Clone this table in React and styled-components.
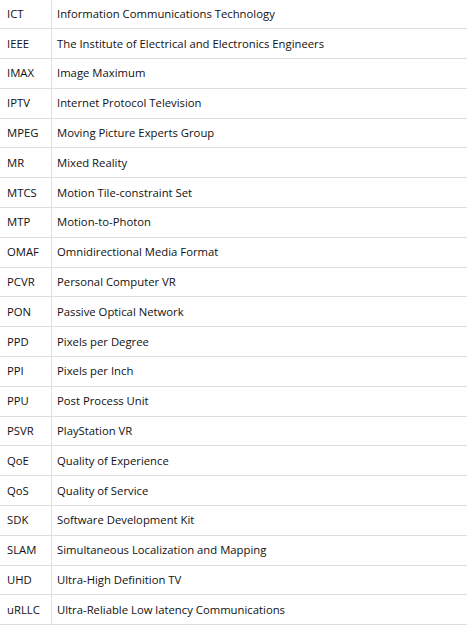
import React from 'react';
import styled, { createGlobalStyle } from 'styled-components';

const Global = createGlobalStyle`
  body {
    margin: 0;
    background: #fff;
  }
`;

const Table = styled.div`
  width: 467px;
  margin-top: -1.5px;
  font-family: 'Open Sans', 'Noto Sans', sans-serif;
  font-size: 11.3px;
  color: #111;
`;

const Row = styled.div`
  display: grid;
  grid-template-columns: 51px 1fr;
  height: 29.8px;
  border-top: 1px solid #dedede;
  box-sizing: border-box;
`;

const Cell = styled.div`
  display: flex;
  align-items: center;
  padding-left: ${(p) => (p.$abbr ? '7px' : '5px')};
  padding-bottom: 1px;
  border-left: ${(p) => (p.$abbr ? 'none' : '1px solid #dedede')};
  white-space: nowrap;
`;

const terms = [
  ['ICT', 'Information Communications Technology'],
  ['IEEE', 'The Institute of Electrical and Electronics Engineers'],
  ['IMAX', 'Image Maximum'],
  ['IPTV', 'Internet Protocol Television'],
  ['MPEG', 'Moving Picture Experts Group'],
  ['MR', 'Mixed Reality'],
  ['MTCS', 'Motion Tile-constraint Set'],
  ['MTP', 'Motion-to-Photon'],
  ['OMAF', 'Omnidirectional Media Format'],
  ['PCVR', 'Personal Computer VR'],
  ['PON', 'Passive Optical Network'],
  ['PPD', 'Pixels per Degree'],
  ['PPI', 'Pixels per Inch'],
  ['PPU', 'Post Process Unit'],
  ['PSVR', 'PlayStation VR'],
  ['QoE', 'Quality of Experience'],
  ['QoS', 'Quality of Service'],
  ['SDK', 'Software Development Kit'],
  ['SLAM', 'Simultaneous Localization and Mapping'],
  ['UHD', 'Ultra-High Definition TV'],
  ['uRLLC', 'Ultra-Reliable Low latency Communications'],
];

const BottomLine = styled.div`
  border-top: 1px solid #dedede;
`;

export default function App() {
  return (
    <>
      <Global />
      <Table>
        {terms.map(([abbr, desc]) => (
          <Row key={abbr}>
            <Cell $abbr>{abbr}</Cell>
            <Cell>{desc}</Cell>
          </Row>
        ))}
        <BottomLine />
      </Table>
    </>
  );
}
